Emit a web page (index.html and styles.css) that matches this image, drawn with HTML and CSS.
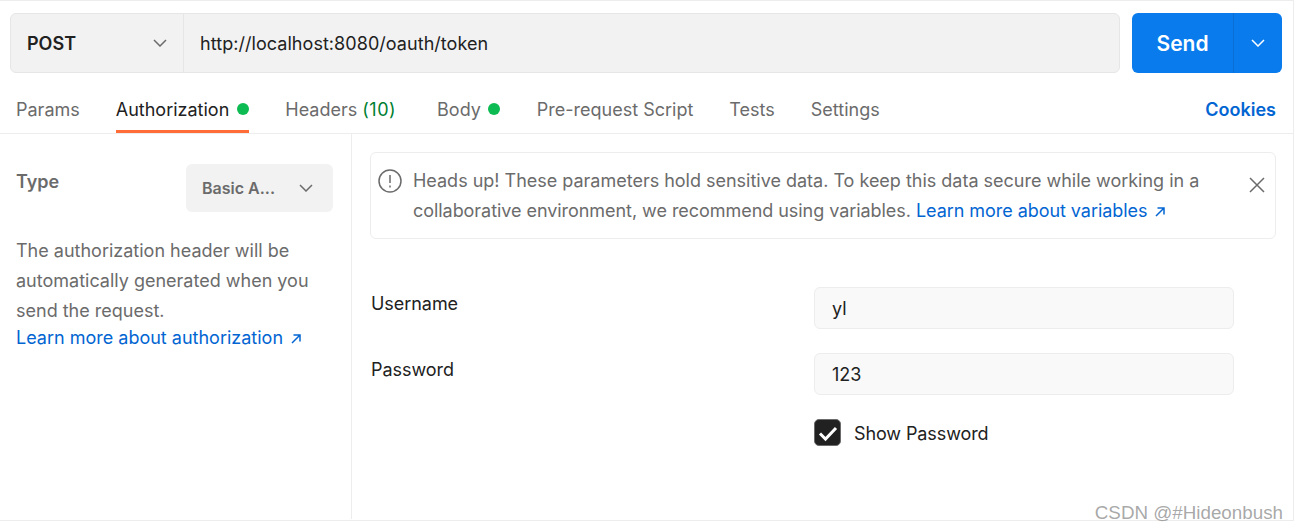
FILE: index.html
```html
<!DOCTYPE html>
<html lang="en">
<head>
    <meta charset="UTF-8">
    <title>Request</title>
    <link rel="stylesheet" href="styles.css">
</head>
<body>
    <div class="container">
        <div class="url-bar">
            <div class="url-group">
                <div class="method">
                    <span>POST</span>
                    <svg class="chevron" viewBox="0 0 14 8"><path d="M1 1l6 6 6-6"/></svg>
                </div>
                <div class="url">http://localhost:8080/oauth/token</div>
            </div>
            <div class="send-btn">
                <div class="send-label">Send</div>
                <div class="send-arrow">
                    <svg class="chevron" viewBox="0 0 14 8"><path d="M1 1l6 6 6-6"/></svg>
                </div>
            </div>
        </div>

        <div class="tabs">
            <div class="tab">Params</div>
            <div class="tab active">Authorization <span class="dot"></span></div>
            <div class="tab tab-headers">Headers <span class="count">(10)</span></div>
            <div class="tab tab-body">Body <span class="dot"></span></div>
            <div class="tab">Pre-request Script</div>
            <div class="tab">Tests</div>
            <div class="tab">Settings</div>
            <div class="cookies">Cookies</div>
        </div>

        <div class="content">
            <div class="sidebar">
                <div class="type-row">
                    <div class="type-label">Type</div>
                    <div class="type-select">
                        <span>Basic A...</span>
                        <svg class="chevron" viewBox="0 0 14 8"><path d="M1 1l6 6 6-6"/></svg>
                    </div>
                </div>
                <p class="help">The authorization header will be automatically generated when you send the request.</p>
                <a class="link">Learn more about authorization
                    <svg class="arrow" viewBox="0 0 10 10"><path d="M1 9l8-8M2.5 1H9v6.500"/></svg>
                </a>
            </div>

            <div class="main">
                <div class="notice">
                    <svg class="notice-icon" viewBox="0 0 24 24">
                        <circle cx="12" cy="12" r="11"/>
                        <path d="M12 6v8M12 16.500v2"/>
                    </svg>
                    <div class="notice-text">
                        <div class="notice-line">Heads up! These parameters hold sensitive data. To keep this data secure while working in a</div>
                        <div class="notice-line second">collaborative environment, we recommend using variables. <a class="link">Learn more about variables
                            <svg class="arrow" viewBox="0 0 10 10"><path d="M1 9l8-8M2.5 1H9v6.500"/></svg></a></div>
                    </div>
                    <svg class="close" viewBox="0 0 16 16"><path d="M1 1l14 14M15 1L1 15"/></svg>
                </div>

                <div class="form-row first">
                    <label class="form-label">Username</label>
                    <div class="field">yl</div>
                </div>
                <div class="form-row">
                    <label class="form-label">Password</label>
                    <div class="field">123</div>
                </div>
                <div class="show-row">
                    <span class="checkbox">
                        <svg viewBox="0 0 22 22"><path d="M3 11.500l5.500 5.500L19 6"/></svg>
                    </span>
                    <span class="show-text">Show Password</span>
                </div>
            </div>
        </div>
        <div class="watermark">CSDN @#Hideonbush</div>
    </div>
</body>
</html>
```

FILE: styles.css
```css
* {
    box-sizing: border-box;
}

html, body {
    margin: 0;
    padding: 0;
    background-color: #fff;
}

body {
    font-family: Inter, 'Liberation Sans', sans-serif;
    font-size: 18px;
    color: #212121;
    height: 529px;
    overflow: hidden;
}

.container {
    position: relative;
    width: 1294px;
    height: 521px;
    border-top: 1px solid #ededed;
    border-right: 1px solid #ededed;
    border-bottom: 1px solid #ededed;
}

.chevron {
    width: 14px;
    height: 8px;
    fill: none;
    stroke: #6b6b6b;
    stroke-width: 1.5;
}

.url-bar {
    display: flex;
    gap: 12px;
    padding: 12px 11px 0 10px;
}

.url-group {
    flex: 1;
    height: 60px;
    display: flex;
    align-items: center;
    background-color: #f2f2f2;
    border: 1px solid #e6e6e6;
    border-radius: 6px;
}

.method {
    width: 173px;
    height: 100%;
    display: flex;
    align-items: center;
    justify-content: space-between;
    padding: 0 16px;
    border-right: 1px solid #e6e6e6;
    font-weight: 600;
}

.url {
    padding-left: 16px;
    letter-spacing: 0.05px;
}

.send-btn {
    width: 150px;
    height: 60px;
    display: flex;
    background-color: #097bed;
    border-radius: 6px;
    color: #fff;
}

.send-label {
    width: 102px;
    display: flex;
    align-items: center;
    justify-content: center;
    font-size: 21px;
    font-weight: 600;
    border-right: 1px solid #0a6fd4;
}

.send-arrow {
    flex: 1;
    display: flex;
    align-items: center;
    justify-content: center;
}

.send-arrow .chevron {
    stroke: #fff;
}

.tabs {
    height: 61px;
    display: flex;
    align-items: stretch;
    gap: 36px;
    padding: 0 17px 0 16px;
    border-bottom: 1px solid #ededed;
}

.tab {
    display: flex;
    align-items: center;
    gap: 7px;
    padding-top: 15px;
    color: #6b6b6b;
    border-bottom: 3px solid transparent;
}

.tab.active {
    gap: 8px;
    color: #212121;
    border-bottom-color: #ff6c37;
}

.tab-headers {
    gap: 5px;
    margin-right: 5px;
}

.tab-body {
    margin-right: 1px;
}

.dot {
    width: 12px;
    height: 12px;
    border-radius: 50%;
    background-color: #0cbb52;
}

.count {
    color: #007f31;
    letter-spacing: 0.5px;
}

.cookies {
    margin-left: auto;
    align-self: center;
    padding-top: 12px;
    color: #0265d2;
    font-weight: 600;
}

.content {
    display: flex;
    height: 385px;
}

.sidebar {
    width: 352px;
    padding: 30px 18px 0 16px;
    border-right: 1px solid #ededed;
    color: #6b6b6b;
}

.type-row {
    display: flex;
    justify-content: space-between;
    align-items: flex-start;
}

.type-label {
    font-weight: 600;
    padding-top: 7px;
}

.type-select {
    width: 147px;
    height: 48px;
    display: flex;
    align-items: center;
    justify-content: space-between;
    padding: 0 20px 0 16px;
    background-color: #f2f2f2;
    border-radius: 6px;
    font-size: 16px;
    font-weight: 600;
}

.help {
    margin: 24px 0 0;
    line-height: 30px;
}

.link {
    color: #0265d2;
}

.sidebar .link {
    display: block;
    line-height: 23px;
}

.arrow {
    width: 10px;
    height: 10px;
    margin-left: 3px;
    fill: none;
    stroke: #0265d2;
    stroke-width: 1.5;
}

.main {
    flex: 1;
    padding: 18px 17px 0 18px;
}

.notice {
    height: 87px;
    display: flex;
    align-items: flex-start;
    border: 1px solid #ededed;
    border-radius: 6px;
    padding: 13px 0 0 7px;
    color: #6b6b6b;
    line-height: 30px;
}

.notice-icon {
    flex: none;
    width: 24px;
    height: 24px;
    margin: 3px 11px 0 0;
    fill: none;
    stroke: #6b6b6b;
    stroke-width: 1.5;
}

.notice-text {
    width: 820px;
    white-space: nowrap;
}

.notice-line {
    letter-spacing: -0.01px;
}

.notice-line.second {
    letter-spacing: -0.05px;
}

.close {
    flex: none;
    width: 16px;
    height: 16px;
    margin: 11px 10px 0 auto;
    fill: none;
    stroke: #6b6b6b;
    stroke-width: 1.5;
}

.form-row {
    display: flex;
    margin-top: 24px;
    height: 42px;
}

.form-row.first {
    margin-top: 48px;
}

.form-label {
    width: 444px;
    padding: 6px 0 0 1px;
    letter-spacing: -0.05px;
}

.field {
    width: 420px;
    height: 42px;
    display: flex;
    align-items: center;
    padding-left: 17px;
    background-color: #f9f9f9;
    border: 1px solid #ededed;
    border-radius: 6px;
}

.show-row {
    display: flex;
    align-items: center;
    gap: 13px;
    margin: 24px 0 0 444px;
}

.show-text {
    padding-top: 1px;
    letter-spacing: -0.1px;
}

.checkbox {
    width: 27px;
    height: 27px;
    display: flex;
    align-items: center;
    justify-content: center;
    background-color: #212121;
    border: 1px solid #6b6b6b;
    border-radius: 5px;
}

.checkbox svg {
    width: 22px;
    height: 22px;
    fill: none;
    stroke: #fff;
    stroke-width: 3;
}

.watermark {
    position: absolute;
    right: 10px;
    bottom: -4px;
    color: rgba(130, 130, 130, 0.7);
    font-family: 'Liberation Sans', sans-serif;
    font-size: 18.8px;
}
```
